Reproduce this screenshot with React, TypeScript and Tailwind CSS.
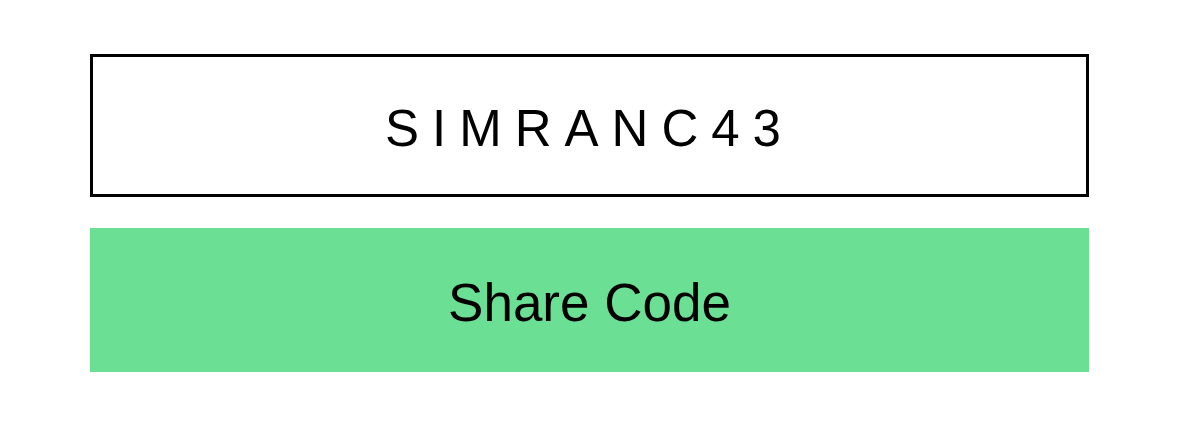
import React from 'react';

const App: React.FC = () => {
  const code = 'SIMRANC43';

  return (
    <div className="min-h-[432px] w-full bg-white px-[90px] pt-[54px] font-['Liberation_Sans',Arial,sans-serif] text-black">
      <div className="flex flex-col gap-[31px]">
        <div className="flex h-[143px] items-center justify-center border-[3px] border-black">
          <span className="text-[51px] leading-none tracking-[13px] pt-[5px]">{code}</span>
        </div>
        <button
          type="button"
          className="flex h-[144px] w-full items-center justify-center bg-[#6bdf94] text-[53px] leading-none pt-[4px]"
        >
          Share Code
        </button>
      </div>
    </div>
  );
};

export default App;
